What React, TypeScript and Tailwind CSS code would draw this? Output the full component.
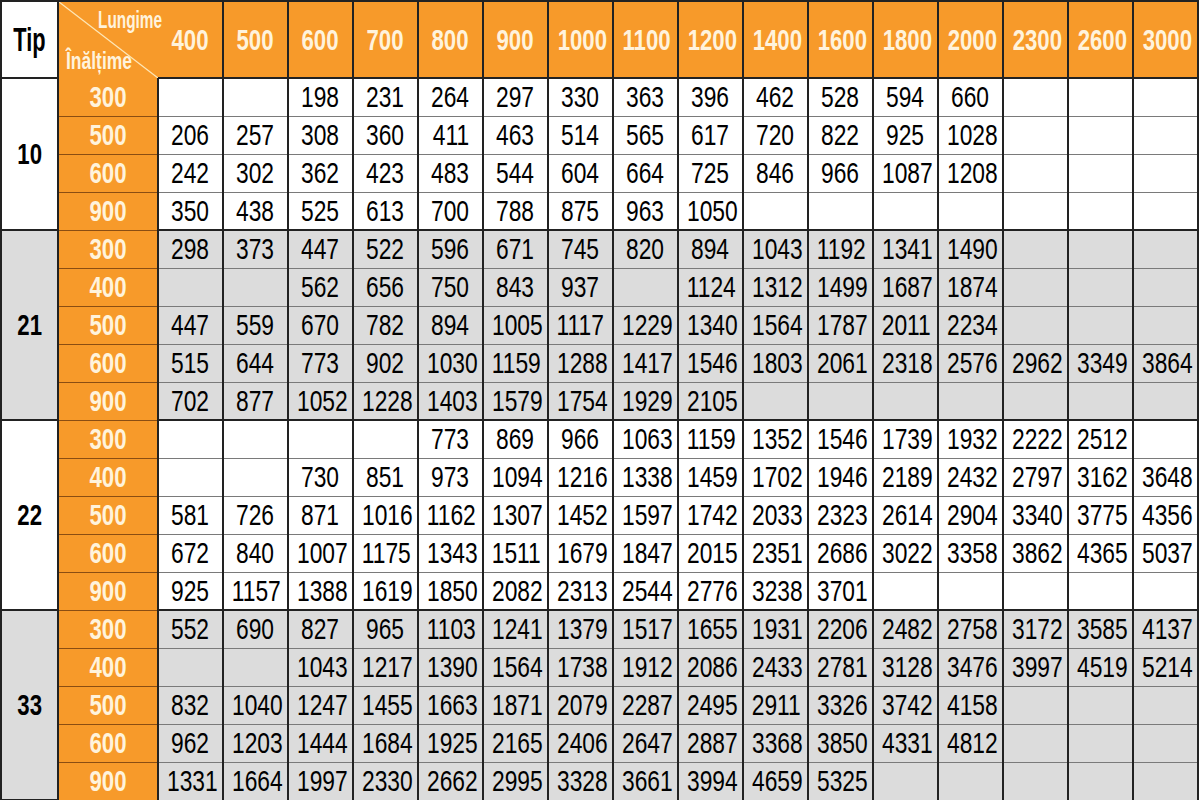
import React from 'react';

const lengths = [400, 500, 600, 700, 800, 900, 1000, 1100, 1200, 1400, 1600, 1800, 2000, 2300, 2600, 3000];

type Group = { tip: string; gray: boolean; rows: [number, (number | null)[]][] };

const _ = null;

const groups: Group[] = [
  {
    tip: '10',
    gray: false,
    rows: [
      [300, [_, _, 198, 231, 264, 297, 330, 363, 396, 462, 528, 594, 660, _, _, _]],
      [500, [206, 257, 308, 360, 411, 463, 514, 565, 617, 720, 822, 925, 1028, _, _, _]],
      [600, [242, 302, 362, 423, 483, 544, 604, 664, 725, 846, 966, 1087, 1208, _, _, _]],
      [900, [350, 438, 525, 613, 700, 788, 875, 963, 1050, _, _, _, _, _, _, _]],
    ],
  },
  {
    tip: '21',
    gray: true,
    rows: [
      [300, [298, 373, 447, 522, 596, 671, 745, 820, 894, 1043, 1192, 1341, 1490, _, _, _]],
      [400, [_, _, 562, 656, 750, 843, 937, _, 1124, 1312, 1499, 1687, 1874, _, _, _]],
      [500, [447, 559, 670, 782, 894, 1005, 1117, 1229, 1340, 1564, 1787, 2011, 2234, _, _, _]],
      [600, [515, 644, 773, 902, 1030, 1159, 1288, 1417, 1546, 1803, 2061, 2318, 2576, 2962, 3349, 3864]],
      [900, [702, 877, 1052, 1228, 1403, 1579, 1754, 1929, 2105, _, _, _, _, _, _, _]],
    ],
  },
  {
    tip: '22',
    gray: false,
    rows: [
      [300, [_, _, _, _, 773, 869, 966, 1063, 1159, 1352, 1546, 1739, 1932, 2222, 2512, _]],
      [400, [_, _, 730, 851, 973, 1094, 1216, 1338, 1459, 1702, 1946, 2189, 2432, 2797, 3162, 3648]],
      [500, [581, 726, 871, 1016, 1162, 1307, 1452, 1597, 1742, 2033, 2323, 2614, 2904, 3340, 3775, 4356]],
      [600, [672, 840, 1007, 1175, 1343, 1511, 1679, 1847, 2015, 2351, 2686, 3022, 3358, 3862, 4365, 5037]],
      [900, [925, 1157, 1388, 1619, 1850, 2082, 2313, 2544, 2776, 3238, 3701, _, _, _, _, _]],
    ],
  },
  {
    tip: '33',
    gray: true,
    rows: [
      [300, [552, 690, 827, 965, 1103, 1241, 1379, 1517, 1655, 1931, 2206, 2482, 2758, 3172, 3585, 4137]],
      [400, [_, _, 1043, 1217, 1390, 1564, 1738, 1912, 2086, 2433, 2781, 3128, 3476, 3997, 4519, 5214]],
      [500, [832, 1040, 1247, 1455, 1663, 1871, 2079, 2287, 2495, 2911, 3326, 3742, 4158, _, _, _]],
      [600, [962, 1203, 1444, 1684, 1925, 2165, 2406, 2647, 2887, 3368, 3850, 4331, 4812, _, _, _]],
      [900, [1331, 1664, 1997, 2330, 2662, 2995, 3328, 3661, 3994, 4659, 5325, _, _, _, _, _]],
    ],
  },
];

// the reference uses a tall condensed face; squeeze Liberation Sans instead
function Narrow({ children, className = '' }: { children: React.ReactNode; className?: string }) {
  return <span className={`inline-block whitespace-nowrap ${className}`}>{children}</span>;
}

export default function App() {
  return (
    <div className="h-[800px] w-[1200px] bg-white font-['Liberation_Sans',Arial,sans-serif]">
      <table className="w-[1197px] table-fixed border-collapse">
        <colgroup>
          <col className="w-[57px]" />
          <col className="w-[100px]" />
          {lengths.map((l) => (
            <col key={l} className="w-[65px]" />
          ))}
        </colgroup>
        <thead>
          <tr className="h-[77px]">
            <th className="border-2 border-[#222] bg-white p-0 text-center text-[33px] font-bold leading-none text-black">
              <Narrow className="scale-x-[0.66]">Tip</Narrow>
            </th>
            <th className="relative border-2 border-r-0 border-b-0 border-[#222] bg-[#f79a2a] p-0">
              <svg className="absolute inset-0 h-full w-full" viewBox="0 0 100 77" preserveAspectRatio="none">
                <line x1="0" y1="0" x2="100" y2="77" stroke="#fde7b8" strokeWidth="1.3" />
              </svg>
              <span className="absolute right-[-4px] top-[6px] origin-right scale-x-[0.64] whitespace-nowrap text-[24px] font-bold leading-none text-[#fff3dc]">
                Lungime
              </span>
              <span className="absolute left-[7px] top-[48px] origin-left scale-x-[0.76] whitespace-nowrap text-[23px] font-bold leading-none text-[#fff3dc]">
                Înălțime
              </span>
            </th>
            {lengths.map((l, k) => (
              <th
                key={l}
                className={`border-2 border-[#222] bg-[#f79a2a] p-0 pt-[1px] text-center text-[30px] font-bold leading-none text-[#fff3dc] ${
                  k === 0 ? 'border-l-0' : ''
                }`}
              >
                <Narrow className="scale-x-[0.74]">{l}</Narrow>
              </th>
            ))}
          </tr>
        </thead>
        <tbody>
          {groups.map((g, gi) =>
            g.rows.map(([h, vals], i) => (
              <tr key={g.tip + h} className="h-[38px]">
                {i === 0 ? (
                  <td
                    rowSpan={g.rows.length}
                    className={`border-2 border-[#222] p-0 text-center text-[30px] font-bold leading-none text-black ${
                      g.gray ? 'bg-[#dcdcdc]' : 'bg-white'
                    }`}
                  >
                    <Narrow className="scale-x-[0.74]">{g.tip}</Narrow>
                  </td>
                ) : null}
                <td
                  className={`border-x-2 border-x-[#222] bg-[#f79a2a] p-0 text-center text-[30px] font-bold leading-none text-[#fff3dc] ${
                    gi === 0 && i === 0 ? 'border-t-0' : 'border-t border-t-[#8a4d12]'
                  }`}
                >
                  <Narrow className="scale-x-[0.74]">{h}</Narrow>
                </td>
                {vals.map((v, j) => (
                  <td
                    key={j}
                    className={`border-x-2 border-x-[#222] p-0 text-center text-[30px] leading-none text-black ${
                      g.gray ? 'bg-[#dcdcdc]' : 'bg-white'
                    } ${i === 0 ? 'border-t-2 border-t-[#222]' : 'border-t border-t-[#7a7a7a]'}`}
                  >
                    {v !== null ? <Narrow className="scale-x-[0.76]">{v}</Narrow> : null}
                  </td>
                ))}
              </tr>
            )),
          )}
        </tbody>
      </table>
    </div>
  );
}
